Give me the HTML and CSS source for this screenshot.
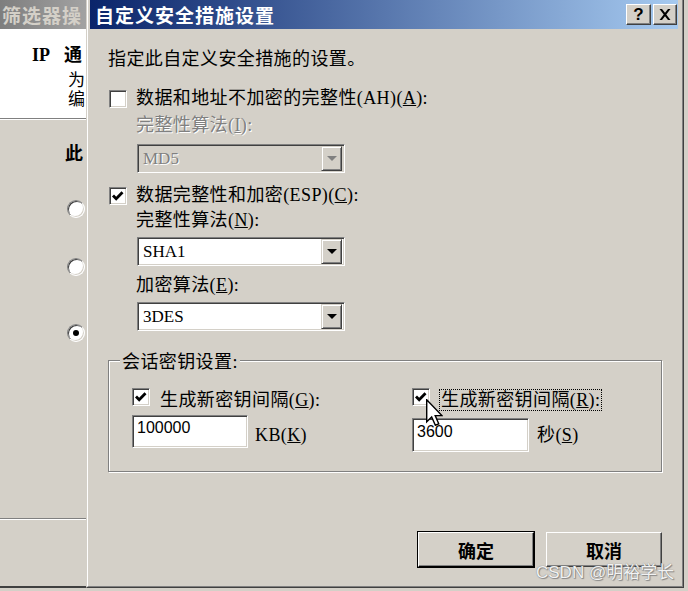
FILE: index.html
```html
<!DOCTYPE html>
<html>
<head>
<meta charset="utf-8">
<link rel="stylesheet" href="styles.css">
</head>
<body>
<div class="bgwin">
  <div class="bg-title">筛选器操</div>
  <div class="bg-head">
    <div class="bg-h1"><span class="ip">IP</span>通</div>
    <div class="bg-p">为<br>编</div>
  </div>
  <div class="bg-body">
    <div class="bg-q">此</div>
    <div class="radio r1"></div>
    <div class="radio r2"></div>
    <div class="radio r3"><span class="dot"></span></div>
    <div class="sep"></div>
  </div>
</div>

<div class="dialog">
  <div class="dlg-in">
    <div class="titlebar">
      <span class="title">自定义安全措施设置</span>
      <span class="tbtn help">?</span>
      <span class="tbtn close"><svg width="12" height="11" viewBox="0 0 12 11"><path d="M0.5 0 L3 0 L6 3.8 L9 0 L11.5 0 L7.3 5.5 L11.5 11 L9 11 L6 7.2 L3 11 L0.5 11 L4.7 5.5 Z" fill="#000"/></svg></span>
    </div>
    <div class="content">
      <div class="intro">指定此自定义安全措施的设置。</div>

      <div class="cbrow r-ah">
        <span class="cb"></span>
        <span class="lbl">数据和地址不加密的完整性(AH)(<u>A</u>):</span>
      </div>
      <div class="sub sub-i disabled">完整性算法(<u>I</u>):</div>
      <div class="combo c-md5 disabled">
        <span class="val">MD5</span>
        <span class="drop"><svg width="10" height="5" viewBox="0 0 10 5"><polygon points="0,0 10,0 5,5" fill="#808080"/></svg></span>
      </div>

      <div class="cbrow r-esp">
        <span class="cb"><svg width="16" height="16" viewBox="0 0 16 16"><polyline points="3,7.5 6.2,10.8 12.5,4.2" fill="none" stroke="#000" stroke-width="2.8"/></svg></span>
        <span class="lbl">数据完整性和加密(ESP)(<u>C</u>):</span>
      </div>
      <div class="sub sub-n">完整性算法(<u>N</u>):</div>
      <div class="combo c-sha">
        <span class="val">SHA1</span>
        <span class="drop"><svg width="10" height="5" viewBox="0 0 10 5"><polygon points="0,0 10,0 5,5" fill="#000"/></svg></span>
      </div>
      <div class="sub sub-e">加密算法(<u>E</u>):</div>
      <div class="combo c-des">
        <span class="val">3DES</span>
        <span class="drop"><svg width="10" height="5" viewBox="0 0 10 5"><polygon points="0,0 10,0 5,5" fill="#000"/></svg></span>
      </div>

      <div class="group">
        <div class="group-label">会话密钥设置:</div>
        <div class="ggrid">
          <div class="gcol gcol-kb">
            <div class="cbrow">
              <span class="cb"><svg width="16" height="16" viewBox="0 0 16 16"><polyline points="3,7.5 6.2,10.8 12.5,4.2" fill="none" stroke="#000" stroke-width="2.8"/></svg></span>
              <span class="lbl">生成新密钥间隔(<u>G</u>):</span>
            </div>
            <div class="inrow">
              <div class="input">100000</div>
              <span class="unit">KB(<u>K</u>)</span>
            </div>
          </div>
          <div class="gcol gcol-sec">
            <div class="cbrow">
              <span class="cb"><svg width="16" height="16" viewBox="0 0 16 16"><polyline points="3,7.5 6.2,10.8 12.5,4.2" fill="none" stroke="#000" stroke-width="2.8"/></svg></span>
              <span class="lbl focus">生成新密钥间隔(<u>R</u>):</span>
            </div>
            <div class="inrow">
              <div class="input">3600</div>
              <span class="unit">秒(<u>S</u>)</span>
            </div>
          </div>
        </div>
      </div>

      <div class="buttons">
        <button class="btn default">确定</button>
        <button class="btn">取消</button>
      </div>
    </div>
  </div>
</div>

<div class="cursor"><svg width="17" height="27" viewBox="0 0 12 19"><path d="M0.5 0.5 L0.5 16 L4 12.6 L6.6 18.5 L9 17.5 L6.5 11.7 L11.2 11.7 Z" fill="#fff" stroke="#000" stroke-width="1" stroke-linejoin="miter"/></svg></div>
<div class="watermark">CSDN @明裕学长</div>
</body>
</html>
```

FILE: styles.css
```css
* { box-sizing: border-box; }
html, body { margin: 0; padding: 0; }
body {
  width: 688px;
  height: 591px;
  overflow: hidden;
  background: #d4d0c8;
  display: flex;
  align-items: flex-start;
  position: relative;
  font-family: "Liberation Serif", "Noto Sans CJK SC", serif;
  font-size: 18px;
  color: #000;
}

/* background window */
.bgwin {
  width: 86px;
  height: 588px;
  flex: none;
  display: flex;
  flex-direction: column;
  overflow: hidden;
  border-bottom: 2px solid #404040;
}
.bg-title {
  height: 29px;
  flex: none;
  background: linear-gradient(to right, #7e7e7e, #a2a2a2);
  color: #d4d0c8;
  font: bold 19px/29px "Noto Sans CJK SC", sans-serif;
  letter-spacing: 1px;
  padding-left: 2px;
  white-space: nowrap;
}
.bg-head {
  height: 90px;
  flex: none;
  background: #fff;
  border-bottom: 1px solid #808080;
  padding-top: 14px;
  white-space: nowrap;
}
.bg-h1 {
  padding-left: 32px;
  font: bold 18px/20px "Noto Sans CJK SC", sans-serif;
}
.ip {
  font-family: "Liberation Serif", serif;
  font-weight: bold;
  margin-right: 14px;
}
.bg-p {
  margin-top: 4px;
  padding-left: 68px;
  font: 17px/19px "Noto Sans CJK SC", sans-serif;
}
.bg-body {
  flex: 1;
  border-top: 1px solid #fff;
  padding-top: 22px;
  display: flex;
  flex-direction: column;
}
.bg-q {
  padding-left: 65px;
  font: bold 18px/20px "Noto Sans CJK SC", sans-serif;
  white-space: nowrap;
}
.radio {
  width: 18px;
  height: 18px;
  margin-left: 67px;
  border-radius: 50%;
  border: 1px solid;
  border-color: #808080 #fff #fff #808080;
  box-shadow: inset 1px 1px 0 #404040, inset -1px -1px 0 #d4d0c8;
  background: #fff;
  display: flex;
  align-items: center;
  justify-content: center;
}
.r1 { margin-top: 38px; }
.r2 { margin-top: 40px; }
.r3 { margin-top: 48px; }
.dot { width: 6px; height: 6px; border-radius: 50%; background: #000; }
.sep {
  margin-top: 176px;
  height: 2px;
  border-top: 1px solid #808080;
  border-bottom: 1px solid #fff;
}

/* dialog */
.dialog {
  width: 598px;
  height: 588px;
  flex: none;
  border-left: 1px solid #d4d0c8;
  border-right: 1px solid #404040;
  border-bottom: 1px solid #404040;
}
.dlg-in {
  height: 100%;
  border-left: 1px solid #fff;
  border-right: 1px solid #808080;
  border-bottom: 1px solid #808080;
  padding: 0 4px 2px 2px;
  display: flex;
  flex-direction: column;
}
.titlebar {
  height: 29px;
  flex: none;
  background: linear-gradient(to right, #0a246a, #a6caf0);
  display: flex;
  align-items: center;
  gap: 2px;
  padding: 0 1px 0 5px;
}
.title {
  flex: 1;
  color: #fff;
  font: bold 19px/29px "Noto Sans CJK SC", sans-serif;
  letter-spacing: 1px;
  white-space: nowrap;
}
.tbtn {
  width: 25px;
  height: 21px;
  background: #d4d0c8;
  border: 1px solid;
  border-color: #fff #404040 #404040 #fff;
  box-shadow: inset -1px -1px 0 #808080;
  display: flex;
  align-items: center;
  justify-content: center;
}
.tbtn.close { width: 24px; }
.tbtn.help {
  font: bold 17px/1 "Liberation Sans", sans-serif;
  padding-bottom: 1px;
}

.content {
  flex: 1;
  padding: 0 16px 0 18px;
  display: flex;
  flex-direction: column;
  align-items: flex-start;
  line-height: 20px;
  letter-spacing: 0.4px;
  white-space: nowrap;
}
.intro { margin-top: 20px; }
.cbrow {
  display: flex;
  align-items: flex-start;
}
.cb {
  width: 18px;
  height: 18px;
  flex: none;
  background: #fff;
  border: 1px solid;
  border-color: #808080 #fff #fff #808080;
  box-shadow: inset 1px 1px 0 #404040, inset -1px -1px 0 #d4d0c8;
  display: flex;
}
.r-ah { margin-top: 19px; }
.r-esp { margin-top: 12px; }
.r-ah .cb, .r-esp .cb { margin-top: 2px; margin-left: 1px; }
.r-ah .lbl, .r-esp .lbl { margin-left: 9px; }

.sub { margin-left: 28px; }
.sub-i { margin-top: 7px; }
.sub-n { margin-top: 5px; }
.sub-e { margin-top: 9px; }
.disabled { color: #808080; text-shadow: 1px 1px 0 #fff; }

.combo {
  margin-left: 29px;
  width: 208px;
  height: 29px;
  display: flex;
  align-items: center;
  padding: 1px 2px 1px 1px;
  background: #fff;
  border: 1px solid;
  border-color: #808080 #fff #fff #808080;
  box-shadow: inset 1px 1px 0 #404040, inset -1px -1px 0 #d4d0c8;
}
.combo.disabled { background: #d4d0c8; }
.c-md5 { margin-top: 9px; }
.c-sha { margin-top: 7px; }
.c-des { margin-top: 7px; }
.val {
  flex: 1;
  padding-left: 4px;
  font: 17px/20px "Liberation Serif", serif;
  letter-spacing: 0;
}
.drop {
  width: 21px;
  height: 25px;
  flex: none;
  background: #d4d0c8;
  border: 1px solid;
  border-color: #d4d0c8 #404040 #404040 #d4d0c8;
  box-shadow: inset 1px 1px 0 #fff, inset -1px -1px 0 #808080;
  display: flex;
  align-items: center;
  justify-content: center;
}

.group {
  margin-top: 29px;
  width: 554px;
  height: 112px;
  border: 1px solid #808080;
  box-shadow: 1px 1px 0 #fff, inset 1px 1px 0 #fff;
  padding-left: 23px;
  display: flex;
  flex-direction: column;
  align-items: flex-start;
}
.group-label {
  margin: -9px 0 0 -12px;
  padding: 0 2px;
  background: #d4d0c8;
}
.ggrid {
  margin-top: 16px;
  display: grid;
  grid-template-columns: 280px auto;
}
.gcol { display: flex; flex-direction: column; align-items: flex-start; }
.gcol-kb .lbl { margin: 2px 0 0 10px; }
.gcol-sec .lbl { margin: 1px 0 0 9px; }
.lbl.focus {
  border: 1px dotted #000;
  padding: 0 1px;
}
.inrow { display: flex; align-items: flex-start; }
.input {
  background: #fff;
  border: 1px solid;
  border-color: #808080 #fff #fff #808080;
  box-shadow: inset 1px 1px 0 #404040, inset -1px -1px 0 #d4d0c8;
  padding: 2px 4px;
  font: 16px/20px "Liberation Sans", sans-serif;
  letter-spacing: 0;
}
.gcol-kb .inrow { margin-top: 5px; }
.gcol-kb .input { width: 116px; height: 33px; }
.gcol-kb .unit { margin: 10px 0 0 7px; }
.gcol-sec .inrow { margin-top: 7px; }
.gcol-sec .input { width: 117px; height: 34px; padding-top: 3px; }
.gcol-sec .unit { margin: 7px 0 0 8px; }

.buttons {
  align-self: stretch;
  margin-top: 60px;
  display: flex;
  justify-content: flex-end;
  gap: 12px;
}
.btn {
  width: 116px;
  height: 35px;
  background: #d4d0c8;
  border: 1px solid;
  border-color: #fff #404040 #404040 #fff;
  box-shadow: inset -1px -1px 0 #808080;
  font: bold 18px/20px "Noto Sans CJK SC", sans-serif;
  color: #000;
  padding: 0;
  margin: 0;
}
.btn.default {
  outline: 1px solid #000;
  border-color: #fff #000 #000 #fff;
}

/* overlays */
.cursor {
  position: absolute;
  left: 426px;
  top: 399px;
  width: 17px;
  height: 27px;
}
.cursor svg { display: block; }
.watermark {
  position: absolute;
  left: 536px;
  top: 562px;
  font: 17px/22px "Liberation Sans", "Noto Sans CJK SC", sans-serif;
  color: #f2f2f2;
  text-shadow: 0 0 1px #6a6a6a, 1px 1px 1px #8a8a8a;
  white-space: nowrap;
}
```
